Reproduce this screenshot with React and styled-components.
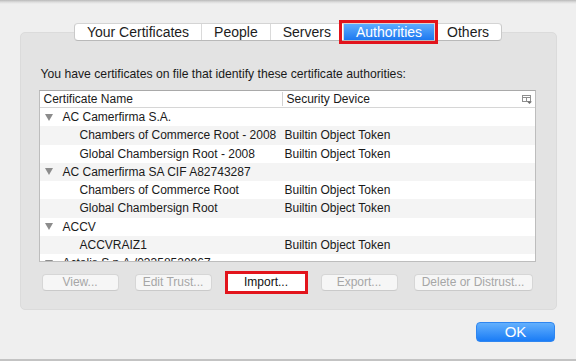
import React from 'react'
import styled, { createGlobalStyle } from 'styled-components'

const GlobalStyle = createGlobalStyle`
  html, body {
    margin: 0;
    padding: 0;
    background: #efefef;
  }
  body {
    font-family: "Liberation Sans", Arial, sans-serif;
    -webkit-font-smoothing: antialiased;
  }
`

const tabs = ['Your Certificates', 'People', 'Servers', 'Authorities', 'Others']

const rows = [
  { level: 0, name: 'AC Camerfirma S.A.' },
  { level: 1, name: 'Chambers of Commerce Root - 2008', device: 'Builtin Object Token' },
  { level: 1, name: 'Global Chambersign Root - 2008', device: 'Builtin Object Token' },
  { level: 0, name: 'AC Camerfirma SA CIF A82743287' },
  { level: 1, name: 'Chambers of Commerce Root', device: 'Builtin Object Token' },
  { level: 1, name: 'Global Chambersign Root', device: 'Builtin Object Token' },
  { level: 0, name: 'ACCV' },
  { level: 1, name: 'ACCVRAIZ1', device: 'Builtin Object Token' },
  { level: 0, name: 'Actalis S.p.A./03358520967' },
]

const actions = [
  { label: 'View...' },
  { label: 'Edit Trust...' },
  { label: 'Import...', active: true },
  { label: 'Export...' },
  { label: 'Delete or Distrust...', wide: true },
]

const ColumnsIcon = () => (
  <svg width="10" height="9" viewBox="0 0 10 9" fill="none">
    <rect x="0.5" y="0.5" width="8" height="6" stroke="#8e8e8e" />
    <line x1="0.5" y1="2.5" x2="8.5" y2="2.5" stroke="#8e8e8e" />
    <line x1="4.5" y1="2.5" x2="4.5" y2="6.5" stroke="#8e8e8e" />
    <path d="M5 6.5 L10 6.5 L7.5 9 Z" fill="#6e6e6e" />
  </svg>
)

const App = () => {
  return (
    <>
      <GlobalStyle />
      <Window>
        <TabBar>
          {tabs.map((t) => (
            <Tab key={t} $active={t === 'Authorities'}>{t}</Tab>
          ))}
        </TabBar>
        <GroupBox>
          <Intro>You have certificates on file that identify these certificate authorities:</Intro>
          <Table>
            <HeaderRow>
              <HeaderCell>Certificate Name</HeaderCell>
              <HeaderCell $divider>Security Device</HeaderCell>
              <IconCell><ColumnsIcon /></IconCell>
            </HeaderRow>
            <Body>
              {rows.map((r, i) => (
                <Row key={i}>
                  <NameCell $level={r.level}>
                    {r.level === 0 && <Disclosure />}
                    {r.name}
                  </NameCell>
                  <DeviceCell>{r.device || ''}</DeviceCell>
                </Row>
              ))}
            </Body>
          </Table>
          <ButtonRow>
            {actions.map((a) => (
              <ActionButton key={a.label} $active={a.active} $wide={a.wide}>
                {a.label}
              </ActionButton>
            ))}
          </ButtonRow>
        </GroupBox>
        <Footer>
          <OkButton>OK</OkButton>
        </Footer>
      </Window>
    </>
  )
}

export default App

const Window = styled.div`
  width: 576px;
  height: 361px;
  box-sizing: border-box;
  padding-top: 23px;
  display: flex;
  flex-direction: column;
  align-items: center;
  background: linear-gradient(#b9b9b9 0, #dcdcdc 2px, #efefef 4px);
  border-bottom: 2px solid #c3c3c3;
  overflow: hidden;
`

const TabBar = styled.div`
  display: flex;
  height: 16px;
  background: #fff;
  border: 1px solid #c9c9c9;
  border-top-color: #d4d4d4;
  border-bottom-color: #b9b9b9;
  border-radius: 4px;
  position: relative;
  z-index: 1;
`

const Tab = styled.div`
  padding: 0 12px;
  font-size: 14px;
  line-height: 16px;
  color: ${(p) => (p.$active ? '#fff' : '#1c1c1c')};
  background: ${(p) => (p.$active ? 'linear-gradient(#5eacfd, #1d78f0)' : 'transparent')};
  outline: ${(p) => (p.$active ? '3px solid #e2141c' : 'none')};
  outline-offset: 1px;
  & + & {
    border-left: 1px solid #dadada;
  }
`

const GroupBox = styled.div`
  width: 537px;
  height: 278px;
  box-sizing: border-box;
  margin-top: -9px;
  padding: 34px 20px 0 18px;
  background: #e3e3e3;
  border: 1px solid #dbdbdb;
  border-radius: 5px;
`

const Intro = styled.div`
  font-size: 12.2px;
  line-height: 15px;
  color: #1a1a1a;
  padding-left: 2px;
`

const Table = styled.div`
  margin-top: 8px;
  height: 172px;
  box-sizing: border-box;
  background: #fff;
  border: 1px solid #bdbdbd;
  border-top-color: #a9a9a9;
  overflow: hidden;
`

const HeaderRow = styled.div`
  display: grid;
  grid-template-columns: 242px 1fr 20px;
  height: 16px;
  border-bottom: 1px solid #d6d6d6;
  align-items: center;
`

const HeaderCell = styled.div`
  font-size: 12px;
  line-height: 14px;
  color: #1a1a1a;
  padding-left: 4px;
  border-left: ${(p) => (p.$divider ? '1px solid #d2d2d2' : 'none')};
`

const IconCell = styled.div`
  display: flex;
  align-items: center;
  justify-content: flex-start;
  height: 16px;
  padding-left: 7px;
`

const Body = styled.div``

const Row = styled.div`
  display: grid;
  grid-template-columns: 242px 1fr;
  height: 18.25px;
  align-items: center;
  font-size: 12px;
  color: #1a1a1a;
  &:nth-child(even) {
    background: #f4f4f4;
  }
`

const NameCell = styled.div`
  display: flex;
  align-items: center;
  padding-left: ${(p) => (p.$level === 0 ? '5px' : '40px')};
  white-space: nowrap;
`

const Disclosure = styled.span`
  width: 0;
  height: 0;
  border-left: 4px solid transparent;
  border-right: 4px solid transparent;
  border-top: 7px solid #8c8c8c;
  margin-right: 10px;
`

const DeviceCell = styled.div`
  padding-left: 3px;
  white-space: nowrap;
`

const ButtonRow = styled.div`
  display: flex;
  gap: 16px;
  margin-top: 12px;
  padding-left: 3px;
`

const ActionButton = styled.div`
  width: ${(p) => (p.$wide ? '119px' : '77px')};
  height: 17px;
  box-sizing: border-box;
  text-align: center;
  font-size: 12px;
  line-height: 15px;
  color: ${(p) => (p.$active ? '#111' : '#a6a6a6')};
  background: ${(p) => (p.$active ? '#fff' : '#f6f6f6')};
  border: 1px solid ${(p) => (p.$active ? '#fff' : '#d6d6d6')};
  border-bottom-color: ${(p) => (p.$active ? '#fff' : '#cacaca')};
  border-radius: ${(p) => (p.$active ? '0' : '4px')};
  outline: ${(p) => (p.$active ? '3px solid #e2141c' : 'none')};
`

const Footer = styled.div`
  align-self: stretch;
  display: flex;
  justify-content: flex-end;
  padding: 12px 21px 0 0;
`

const OkButton = styled.div`
  width: 79px;
  height: 20px;
  box-sizing: border-box;
  border-radius: 4px;
  background: linear-gradient(#63b0fd, #1a7cf6);
  border: 1px solid #2f86f0;
  color: #fff;
  font-size: 15px;
  line-height: 18px;
  text-align: center;
`
